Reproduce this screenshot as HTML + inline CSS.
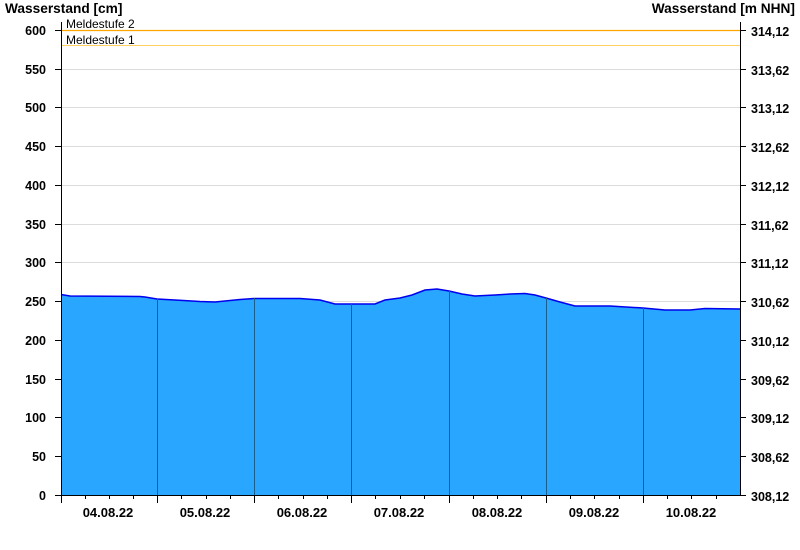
<!DOCTYPE html>
<html><head><style>
body{margin:0;background:#fff;}
svg{display:block;font-family:"Liberation Sans",Arial,sans-serif;}
.b{font-weight:bold;font-size:12.5px;fill:#000;}
.t{font-weight:bold;font-size:13.7px;fill:#000;}
.d{font-weight:bold;font-size:13px;fill:#000;}
</style></head><body>
<svg width="800" height="550" viewBox="0 0 800 550">
<g stroke="#dcdcdc" stroke-width="1">
<line x1="61" x2="740" y1="69.5" y2="69.5"/><line x1="61" x2="740" y1="107.5" y2="107.5"/>
<line x1="61" x2="740" y1="146.5" y2="146.5"/><line x1="61" x2="740" y1="185.5" y2="185.5"/>
<line x1="61" x2="740" y1="224.5" y2="224.5"/><line x1="61" x2="740" y1="262.5" y2="262.5"/>
<line x1="61" x2="740" y1="301.5" y2="301.5"/><line x1="61" x2="740" y1="340.5" y2="340.5"/>
<line x1="61" x2="740" y1="379.5" y2="379.5"/><line x1="61" x2="740" y1="417.5" y2="417.5"/>
<line x1="61" x2="740" y1="456.5" y2="456.5"/>
</g>
<line x1="61" x2="740" y1="30.5" y2="30.5" stroke="#ffa500" stroke-width="1.3"/>
<line x1="61" x2="740" y1="45.5" y2="45.5" stroke="#ffd060" stroke-width="1"/>
<text x="66" y="28" font-size="12" fill="#000">Meldestufe 2</text>
<text x="66" y="44" font-size="12" fill="#000">Meldestufe 1</text>
<path d="M61,495 L61,294.5 L70,296 L140,296.5 L145,297 L157,299 L175,300 L200,301.5 L215,302 L225,301 L240,299.5 L254,298.5 L300,298.5 L320,300 L335,304 L375,304 L385,300 L400,298 L412,295 L425,290 L437,289 L449,291 L462,294 L475,296 L495,295 L510,294 L525,293.5 L535,295 L546,298 L560,302 L575,306 L610,306 L643,308 L665,310 L690,310 L705,308.5 L740,309 L740,495 Z" fill="#29a6ff"/>
<path d="M61,294.5 L70,296 L140,296.5 L145,297 L157,299 L175,300 L200,301.5 L215,302 L225,301 L240,299.5 L254,298.5 L300,298.5 L320,300 L335,304 L375,304 L385,300 L400,298 L412,295 L425,290 L437,289 L449,291 L462,294 L475,296 L495,295 L510,294 L525,293.5 L535,295 L546,298 L560,302 L575,306 L610,306 L643,308 L665,310 L690,310 L705,308.5 L740,309" fill="none" stroke="#0000ee" stroke-width="1.5"/>
<g stroke="#1a5f8c" stroke-width="1">
<line x1="157.5" x2="157.5" y1="299" y2="495"/><line x1="254.5" x2="254.5" y1="298" y2="495"/>
<line x1="351.5" x2="351.5" y1="304" y2="495"/><line x1="449.5" x2="449.5" y1="291" y2="495"/>
<line x1="546.5" x2="546.5" y1="298" y2="495"/><line x1="643.5" x2="643.5" y1="308" y2="495"/>
</g>
<g stroke="#000" stroke-width="1">
<line x1="61.5" x2="61.5" y1="22" y2="495"/>
<line x1="740.5" x2="740.5" y1="22" y2="495"/>
<line x1="55" x2="746" y1="495.5" y2="495.5"/>
</g>
<g stroke="#000" stroke-width="1">
<line x1="55" x2="61" y1="30.5" y2="30.5"/><line x1="55" x2="61" y1="69.5" y2="69.5"/><line x1="55" x2="61" y1="107.5" y2="107.5"/><line x1="55" x2="61" y1="146.5" y2="146.5"/><line x1="55" x2="61" y1="185.5" y2="185.5"/><line x1="55" x2="61" y1="224.5" y2="224.5"/><line x1="55" x2="61" y1="262.5" y2="262.5"/><line x1="55" x2="61" y1="301.5" y2="301.5"/><line x1="55" x2="61" y1="340.5" y2="340.5"/><line x1="55" x2="61" y1="379.5" y2="379.5"/><line x1="55" x2="61" y1="417.5" y2="417.5"/><line x1="55" x2="61" y1="456.5" y2="456.5"/>
<line x1="740" x2="746" y1="30.5" y2="30.5"/><line x1="740" x2="746" y1="69.5" y2="69.5"/><line x1="740" x2="746" y1="107.5" y2="107.5"/><line x1="740" x2="746" y1="146.5" y2="146.5"/><line x1="740" x2="746" y1="185.5" y2="185.5"/><line x1="740" x2="746" y1="224.5" y2="224.5"/><line x1="740" x2="746" y1="262.5" y2="262.5"/><line x1="740" x2="746" y1="301.5" y2="301.5"/><line x1="740" x2="746" y1="340.5" y2="340.5"/><line x1="740" x2="746" y1="379.5" y2="379.5"/><line x1="740" x2="746" y1="417.5" y2="417.5"/><line x1="740" x2="746" y1="456.5" y2="456.5"/>
<line x1="61.5" x2="61.5" y1="495" y2="503"/><line x1="157.5" x2="157.5" y1="495" y2="503"/><line x1="254.5" x2="254.5" y1="495" y2="503"/><line x1="351.5" x2="351.5" y1="495" y2="503"/><line x1="449.5" x2="449.5" y1="495" y2="503"/><line x1="546.5" x2="546.5" y1="495" y2="503"/><line x1="643.5" x2="643.5" y1="495" y2="503"/>
<line x1="85.5" x2="85.5" y1="495" y2="499"/><line x1="109.5" x2="109.5" y1="495" y2="499"/><line x1="133.5" x2="133.5" y1="495" y2="499"/>
<line x1="181.5" x2="181.5" y1="495" y2="499"/><line x1="206.5" x2="206.5" y1="495" y2="499"/><line x1="230.5" x2="230.5" y1="495" y2="499"/>
<line x1="278.5" x2="278.5" y1="495" y2="499"/><line x1="303.5" x2="303.5" y1="495" y2="499"/><line x1="327.5" x2="327.5" y1="495" y2="499"/>
<line x1="375.5" x2="375.5" y1="495" y2="499"/><line x1="400.5" x2="400.5" y1="495" y2="499"/><line x1="424.5" x2="424.5" y1="495" y2="499"/>
<line x1="473.5" x2="473.5" y1="495" y2="499"/><line x1="497.5" x2="497.5" y1="495" y2="499"/><line x1="521.5" x2="521.5" y1="495" y2="499"/>
<line x1="570.5" x2="570.5" y1="495" y2="499"/><line x1="594.5" x2="594.5" y1="495" y2="499"/><line x1="619.5" x2="619.5" y1="495" y2="499"/>
<line x1="667.5" x2="667.5" y1="495" y2="499"/><line x1="691.5" x2="691.5" y1="495" y2="499"/><line x1="716.5" x2="716.5" y1="495" y2="499"/>
</g>
<text x="5" y="13" class="t">Wasserstand [cm]</text>
<text x="795" y="13" class="t" text-anchor="end">Wasserstand [m NHN]</text>
<g text-anchor="end">
<text x="46" y="35" class="b">600</text><text x="46" y="74" class="b">550</text><text x="46" y="112" class="b">500</text><text x="46" y="151" class="b">450</text><text x="46" y="190" class="b">400</text><text x="46" y="229" class="b">350</text><text x="46" y="267" class="b">300</text><text x="46" y="306" class="b">250</text><text x="46" y="345" class="b">200</text><text x="46" y="384" class="b">150</text><text x="46" y="422" class="b">100</text><text x="46" y="461" class="b">50</text><text x="46" y="500" class="b">0</text>
</g>
<g>
<text x="751" y="36" class="b">314,12</text><text x="751" y="75" class="b">313,62</text><text x="751" y="113" class="b">313,12</text><text x="751" y="152" class="b">312,62</text><text x="751" y="191" class="b">312,12</text><text x="751" y="230" class="b">311,62</text><text x="751" y="268" class="b">311,12</text><text x="751" y="307" class="b">310,62</text><text x="751" y="346" class="b">310,12</text><text x="751" y="385" class="b">309,62</text><text x="751" y="423" class="b">309,12</text><text x="751" y="462" class="b">308,62</text><text x="751" y="501" class="b">308,12</text>
</g>
<g text-anchor="middle">
<text x="108" y="517" class="d">04.08.22</text><text x="205" y="517" class="d">05.08.22</text><text x="302" y="517" class="d">06.08.22</text><text x="399" y="517" class="d">07.08.22</text><text x="497" y="517" class="d">08.08.22</text><text x="594" y="517" class="d">09.08.22</text><text x="691" y="517" class="d">10.08.22</text>
</g>
</svg>
</body></html>
